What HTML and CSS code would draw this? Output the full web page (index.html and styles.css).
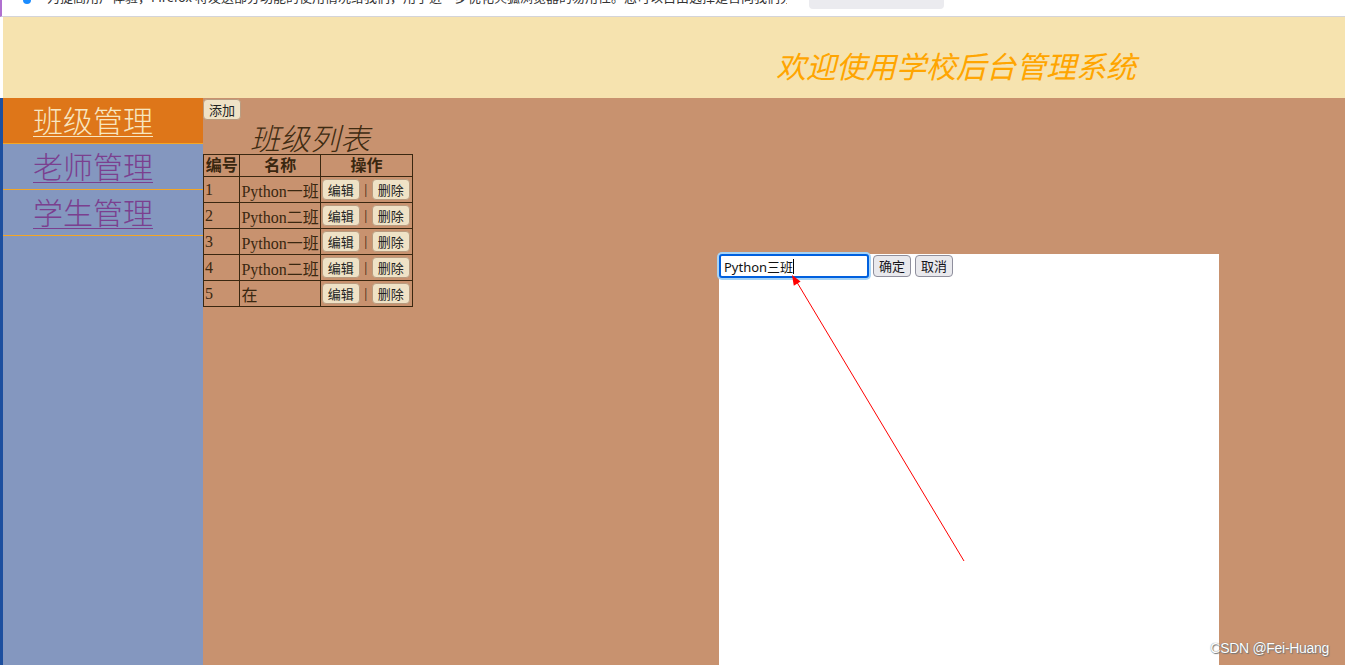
FILE: index.html
```html
<!DOCTYPE html>
<html lang="zh">
<head>
<meta charset="utf-8">
<title>学校后台管理系统</title>
<link rel="stylesheet" href="styles.css">
</head>
<body>
<div class="topbar">
  <span class="topdot"></span>
  <span class="toptext">为提高用户体验，Firefox 将发送部分功能的使用情况给我们，用于进一步优化火狐浏览器的易用性。您可以自由选择是否向我们分享数据。</span>
  <span class="topbtn"></span>
</div>
<div class="page">
  <header class="header">
    <h1 class="title">欢迎使用学校后台管理系统</h1>
  </header>
  <div class="main">
    <nav class="menu">
      <a class="menu-item active" href="#">班级管理</a>
      <a class="menu-item" href="#">老师管理</a>
      <a class="menu-item" href="#">学生管理</a>
    </nav>
    <section class="content">
      <button class="btn">添加</button>
      <table class="list">
        <caption>班级列表</caption>
        <thead>
          <tr><th class="c1">编号</th><th class="c2">名称</th><th class="c3">操作</th></tr>
        </thead>
        <tbody>
          <tr><td>1</td><td>Python一班</td><td class="ops"><button class="btn">编辑</button><span class="sep">|</span><button class="btn">删除</button></td></tr>
          <tr><td>2</td><td>Python二班</td><td class="ops"><button class="btn">编辑</button><span class="sep">|</span><button class="btn">删除</button></td></tr>
          <tr><td>3</td><td>Python一班</td><td class="ops"><button class="btn">编辑</button><span class="sep">|</span><button class="btn">删除</button></td></tr>
          <tr><td>4</td><td>Python二班</td><td class="ops"><button class="btn">编辑</button><span class="sep">|</span><button class="btn">删除</button></td></tr>
          <tr><td>5</td><td>在</td><td class="ops"><button class="btn">编辑</button><span class="sep">|</span><button class="btn">删除</button></td></tr>
        </tbody>
      </table>
      <div class="modal">
        <div class="modal-row">
          <span class="input">Python三班<span class="caret"></span></span>
          <button class="mbtn">确定</button>
          <button class="mbtn">取消</button>
        </div>
      </div>
    </section>
  </div>
</div>
<svg class="arrow" width="1345" height="665" viewBox="0 0 1345 665">
  <line x1="964" y1="561" x2="795" y2="279" stroke="#ff0000" stroke-width="1"/>
  <polygon points="792,275 800.6,281.5 793.8,285.7" fill="#ff0000"/>
</svg>
<div class="watermark">CSDN @Fei-Huang</div>
</body>
</html>
```

FILE: styles.css
```css
* { box-sizing: border-box; }

html, body {
  margin: 0;
  padding: 0;
  height: 100%;
  overflow: hidden;
}

body {
  background: #ffffff;
  font-family: "Liberation Serif", "Noto Sans CJK SC", serif;
  position: relative;
}

.topbar {
  height: 17px;
  background: #ffffff;
  border-bottom: 1px solid #d4d4d8;
  display: flex;
  align-items: flex-start;
  overflow: hidden;
  border-left: 2px solid #b070d0;
  position: relative;
}

.topdot {
  width: 8px;
  height: 8px;
  border-radius: 50%;
  background: #1a8cff;
  margin: -4px 0 0 21px;
  flex: none;
}

.toptext {
  font-family: "Noto Sans CJK SC", "Noto Sans", sans-serif;
  font-size: 13px;
  line-height: 16px;
  color: #333;
  margin: -11px 0 0 16px;
  white-space: nowrap;
  width: 740px;
  overflow: hidden;
  flex: none;
}

.topbtn {
  width: 135px;
  height: 9px;
  background: #ebebef;
  border-radius: 0 0 4px 4px;
  margin-left: 22px;
  flex: none;
}

.page {
  display: flex;
  flex-direction: column;
  height: calc(100% - 17px);
}

.header {
  height: 81px;
  background: #f6e3af;
  margin-left: 3px;
  flex: none;
}

.title {
  margin: 0;
  padding: 29px 0 0 773px;
  font-size: 30px;
  line-height: 38px;
  font-weight: normal;
  font-style: italic;
  color: #ffa500;
  font-family: "Noto Sans CJK SC", sans-serif;
  white-space: nowrap;
}

.main {
  flex: 1;
  display: flex;
  border-left: 3px solid #1d4f9f;
}

.menu {
  width: 200px;
  flex: none;
  background: #8497bf;
  display: flex;
  flex-direction: column;
}

.menu-item {
  display: block;
  height: 46px;
  line-height: 43px;
  padding-left: 30px;
  font-size: 30px;
  color: #7b3f8f;
  text-decoration: underline;
  text-decoration-thickness: 1px;
  text-underline-offset: 4px;
  border-bottom: 1px solid #f5a623;
  font-family: "Noto Sans CJK SC", sans-serif;
  font-weight: 300;
}

.menu-item.active {
  background: #de7619;
  color: #f8e6c0;
}

.content {
  flex: 1;
  background: #c8926f;
  position: relative;
  padding-top: 1px;
}

.btn {
  font-family: "Noto Sans CJK SC", "Noto Sans", sans-serif;
  font-size: 13px;
  line-height: 17px;
  height: 21px;
  padding: 1px 5px;
  background: #efe2c6;
  color: #222;
  border: 1px solid #b99c80;
  border-radius: 4px;
  margin: 0;
  vertical-align: middle;
}

.content > .btn {
  display: block;
}

.list {
  border-collapse: collapse;
  border: 1px solid #3a2710;
  color: #3a2710;
  font-size: 16px;
  width: 210px;
}

.list caption {
  font-style: italic;
  font-size: 30px;
  line-height: 34px;
  font-family: "Noto Sans CJK SC", sans-serif;
  font-weight: 300;
  color: #3e2b12;
  padding-left: 4px;
}

.list th,
.list td {
  border: 1px solid #3a2710;
  padding: 0 1px;
  white-space: nowrap;
}

.list th {
  height: 22px;
  line-height: 20px;
  font-weight: bold;
  text-align: center;
}

.list td {
  height: 26px;
  text-align: left;
}

.list td.ops {
  padding: 0 0 0 1px;
}

.sep {
  display: inline-block;
  width: 12px;
  text-align: center;
  font-size: 15px;
  color: #3a2710;
  vertical-align: middle;
}

.c1 { width: 37px; }
.c2 { width: 80px; }
.c3 { width: 93px; }

.modal {
  position: absolute;
  left: 516px;
  top: 156px;
  width: 500px;
  height: 430px;
  background: #ffffff;
}

.modal-row {
  display: flex;
  align-items: center;
  gap: 4px;
}

.input {
  display: flex;
  align-items: center;
  width: 150px;
  height: 24px;
  border: 2px solid #0060df;
  border-radius: 3px;
  box-shadow: 0 0 0 2px #a7d3f5;
  padding-left: 3px;
  font-family: "Noto Sans", "Noto Sans CJK SC", sans-serif;
  font-size: 13px;
  color: #111;
  background: #fff;
}

.caret {
  display: inline-block;
  width: 1px;
  height: 15px;
  background: #000;
}

.mbtn {
  font-family: "Noto Sans CJK SC", "Noto Sans", sans-serif;
  font-size: 13px;
  line-height: 18px;
  height: 22px;
  padding: 1px 5px;
  background: #e9e9ed;
  color: #15141a;
  border: 1px solid #8f8f9d;
  border-radius: 4px;
  margin: 0;
}

.arrow {
  position: absolute;
  left: 0;
  top: 0;
  pointer-events: none;
}

.watermark {
  position: absolute;
  right: 16px;
  bottom: 9px;
  font-family: "Liberation Sans", sans-serif;
  font-size: 14px;
  color: #ffffff;
  text-shadow: 0 0 1px #666, 1px 1px 1px #777;
  letter-spacing: -0.3px;
}
```
